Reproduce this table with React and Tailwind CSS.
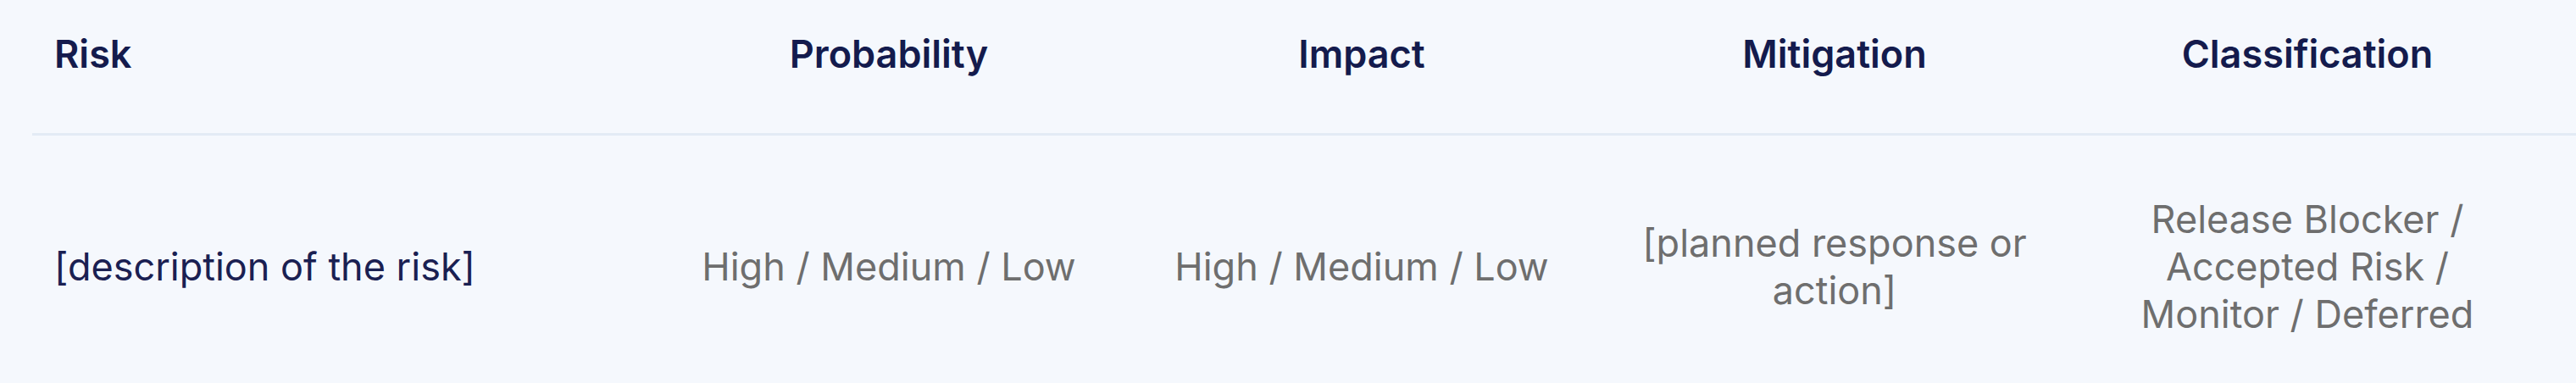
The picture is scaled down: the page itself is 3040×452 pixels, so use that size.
const columns = [
  { key: 'risk', label: 'Risk', align: 'left' },
  { key: 'probability', label: 'Probability', align: 'center' },
  { key: 'impact', label: 'Impact', align: 'center' },
  { key: 'mitigation', label: 'Mitigation', align: 'center' },
  { key: 'classification', label: 'Classification', align: 'center' },
];

const rows = [
  {
    risk: '[description of the risk]',
    probability: 'High / Medium / Low',
    impact: 'High / Medium / Low',
    mitigation: '[planned response or action]',
    classification: 'Release Blocker / Accepted Risk / Monitor / Deferred',
  },
];

const App = () => {
  return (
    <div
      className="min-h-[452px] w-full overflow-hidden bg-[#f5f8fd] pl-[38px]"
      style={{ fontFamily: 'Inter, "Noto Sans", sans-serif' }}
    >
      <div className="border-b-[3px] border-[#e3ebf5]">
        <div className="grid grid-cols-[732px_558px_558px_558px_558px]">
          {columns.map((col) => (
            <div
              key={col.key}
              className={`pt-[36px] pb-[65px] text-[45px] font-semibold leading-[56px] text-[#141b4d] ${
                col.align === 'left' ? 'px-[26px] text-left' : 'px-[40px] text-center'
              }`}
            >
              {col.label}
            </div>
          ))}
        </div>
      </div>
      {rows.map((row, i) => (
        <div key={i} className="grid grid-cols-[732px_558px_558px_558px_558px] items-center py-[71px]">
          {columns.map((col) => (
            <div
              key={col.key}
              className={`text-[45px] leading-[56px] ${
                col.key === 'risk' ? 'px-[26px] text-left text-[#1a2052]' : 'px-[40px] text-center text-[#6e6e6e]'
              }`}
            >
              {row[col.key]}
            </div>
          ))}
        </div>
      ))}
    </div>
  );
};

export default App;
